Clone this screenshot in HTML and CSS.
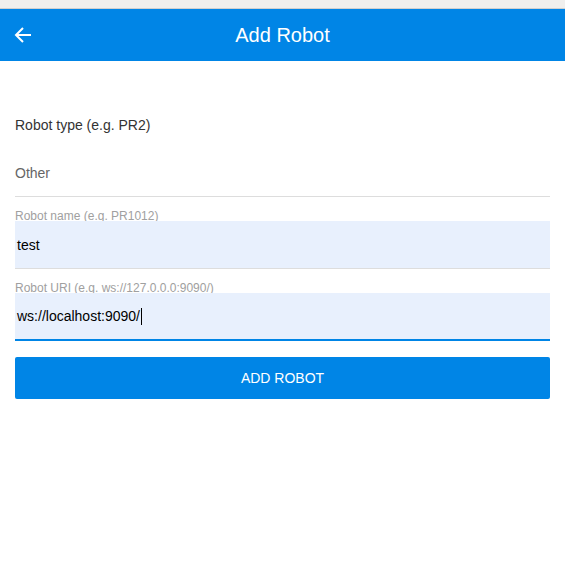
FILE: index.html
```html
<!DOCTYPE html>
<html>
<head>
<meta charset="utf-8">
<link rel="stylesheet" href="styles.css">
</head>
<body>
<div class="chrome"></div>
<header class="bar">
  <button class="back" aria-label="Back">
    <svg width="20" height="20" viewBox="0 0 20 20"><path d="M18 10H3M10 3L3 10l7 7" fill="none" stroke="#fff" stroke-width="2"/></svg>
  </button>
  <h1 class="title">Add Robot</h1>
</header>
<main class="form">
  <div class="type-label">Robot type (e.g. PR2)</div>
  <div class="select">Other</div>
  <div class="field">
    <label class="flabel">Robot name (e.g. PR1012)</label>
    <div class="input">test</div>
  </div>
  <div class="field">
    <label class="flabel">Robot URI (e.g. ws://127.0.0.0:9090/)</label>
    <div class="input focused">ws://localhost:9090/<span class="caret"></span></div>
  </div>
  <button class="submit">ADD ROBOT</button>
</main>
</body>
</html>
```
FILE: styles.css
```css
html, body { margin: 0; padding: 0; background: #fff; }
body { font-family: "Liberation Sans", Arial, sans-serif; width: 565px; }
.chrome { height: 8px; background: #f0efed; border-bottom: 1px solid #cfcfcf; }
.bar { height: 52px; background: #0085e6; display: flex; align-items: center; position: relative; }
.back { background: none; border: 0; padding: 0; margin-left: 13px; width: 20px; height: 20px; display: flex; }
.title { position: absolute; left: 0; right: 0; text-align: center; margin: 0; font-weight: normal; font-size: 20px; color: #fff; pointer-events: none; }
.form { padding: 0 15px; display: flex; flex-direction: column; }
.type-label { margin-top: 56px; font-size: 14px; color: #333; line-height: 16px; }
.select { margin-top: 32px; font-size: 14px; color: #666; line-height: 16px; padding-bottom: 15px; border-bottom: 1px solid #ddd; }
.field { display: flex; flex-direction: column; }
.flabel { font-size: 12px; color: #a0a0a0; margin-top: 15px; line-height: 9px; }
.input { height: 47px; background: #e8f0fd; border-bottom: 1px solid #ddd; font-size: 14px; color: #000; display: flex; align-items: center; padding-left: 2px; }
.input.focused { border-bottom: 2px solid #0085e6; height: 46px; }
.caret { display: inline-block; width: 1px; height: 17px; background: #000; margin-left: 1px; }
.submit { margin-top: 16px; height: 42px; background: #0085e6; color: #fff; border: 0; border-radius: 2px; font-family: inherit; font-size: 14px; }
```
